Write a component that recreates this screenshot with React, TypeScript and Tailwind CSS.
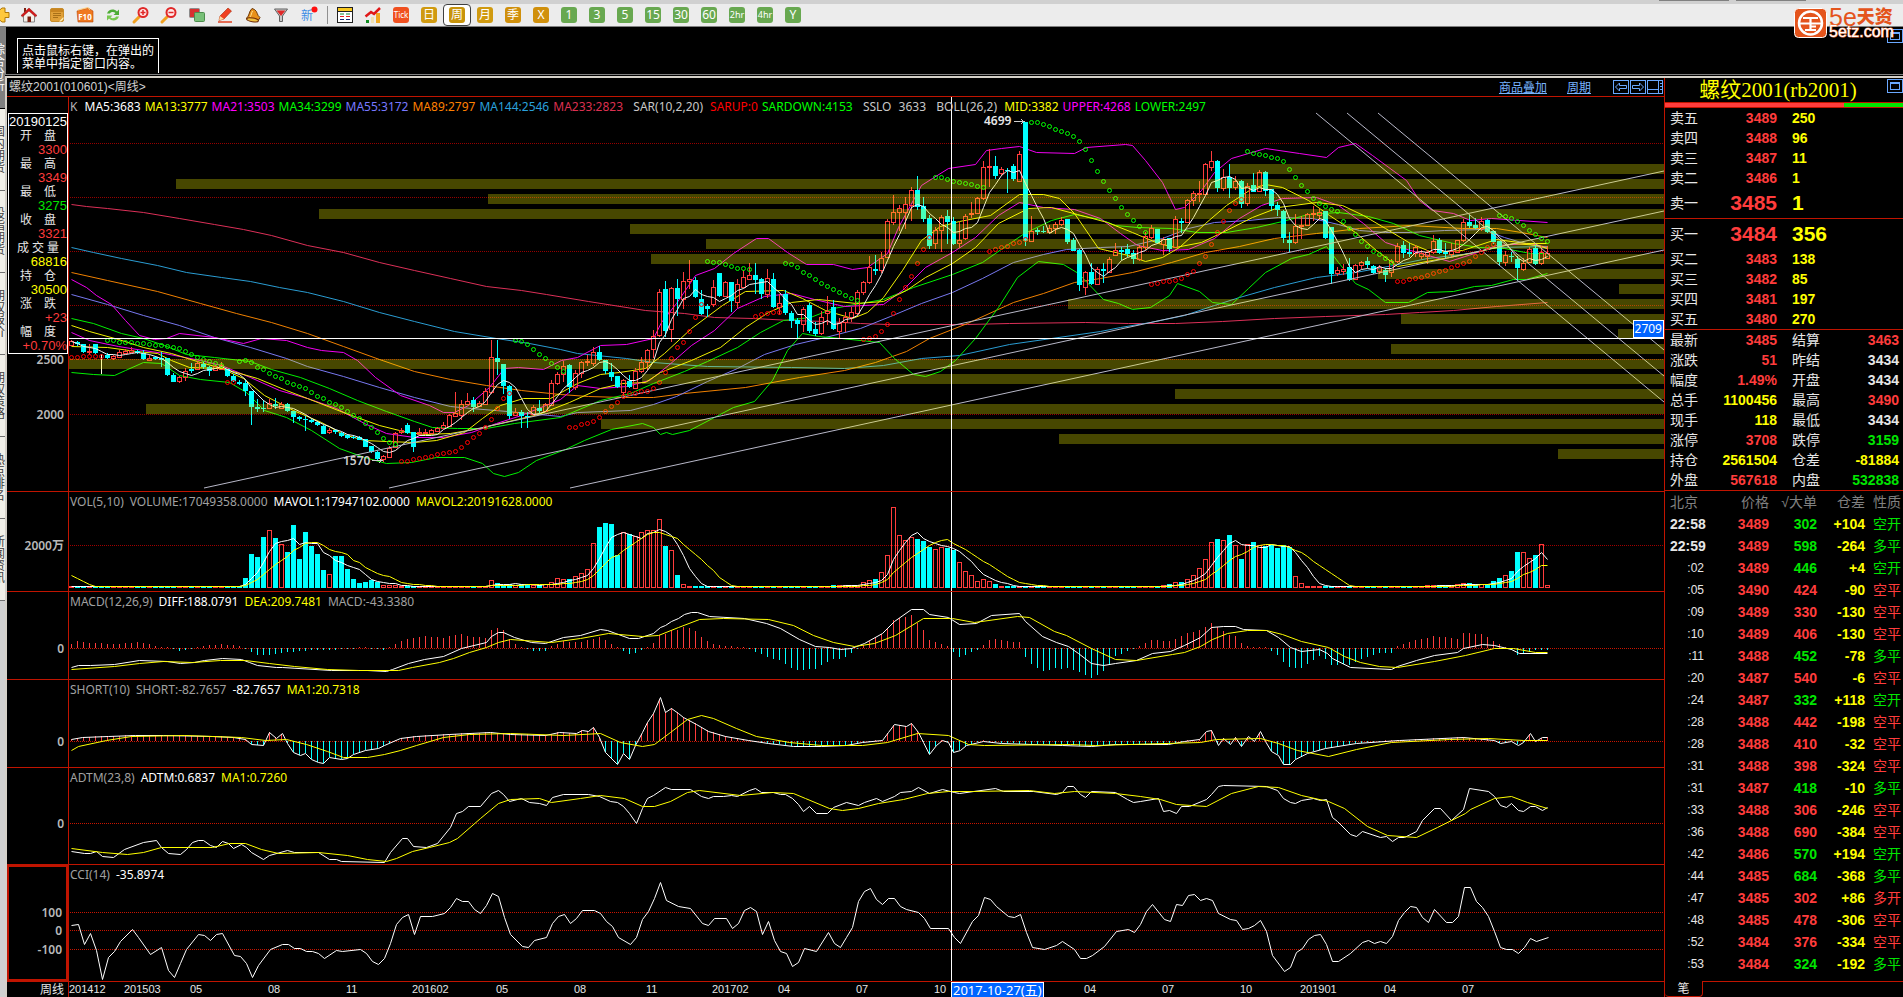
import type { ReactNode } from 'react';

const BARS = 247;
const LEFT = 69;
const WIDTH = 1595;
const CURSOR_X = 951;

const barX = (i: number) => 71 + i * 6;

// direction + high/top/bottom/low of every weekly candle
const candleData = `r340/341/345/346 d341/342/344/346 d344/344/352/353 r344/351/352/355 d344/344/353/354 w353/353/354/374 d353/355/358/359
r355/356/358/360 r350/352/357/357 r349/351/353/353 r347/350/352/353 d350/351/353/354 d350/353/359/360 r355/358/360/361 d356/357/359/360
d352/358/360/367 d358/358/375/376 d373/375/382/382 r376/377/381/383 r368/371/377/381 d363/369/371/373 r361/363/369/370 d362/364/367/369
d366/367/371/376 r365/366/370/371 r362/365/369/370 d369/369/376/377 d374/376/381/382 d380/382/384/385 d380/383/391/396 d391/391/407/425
d399/407/409/412 d400/408/409/412 r399/403/408/409 d398/404/406/409 r402/404/408/409 d403/404/411/412 d411/411/417/423 d416/417/419/421
d416/419/420/431 d419/420/422/423 d421/422/425/426 d425/426/434/434 r428/430/432/434 d429/430/432/434 d432/433/436/437 d434/435/438/439
d435/437/438/439 d436/437/440/440 d439/439/447/447 d446/446/452/453 d451/452/459/460 r455/456/459/462 r446/448/457/458 r432/433/447/448
r428/430/432/434 d423/425/433/434 d432/432/447/452 r428/432/434/436 r429/432/433/434 r429/430/433/434 r427/428/431/432 r422/425/428/428
r414/415/426/427 r392/413/416/417 r400/404/415/420 r393/401/404/405 d397/400/407/412 r401/403/406/407 r388/391/404/404 r340/357/392/394
d340/358/362/375 d364/364/386/394 d385/386/416/419 r408/412/415/416 d410/412/416/428 d412/416/417/428 r405/407/414/416 d400/408/411/413
r403/404/411/412 r380/383/405/406 r372/374/383/385 r361/366/374/382 d364/365/387/393 r370/373/387/390 r361/362/373/378 r355/361/362/366
r347/352/363/366 d346/352/360/361 d360/360/371/374 d363/372/377/381 d376/376/387/388 r379/380/392/396 d375/381/387/388 r368/371/388/389
r357/362/371/373 r349/350/362/370 r330/336/349/358 r289/292/335/337 d281/289/331/337 r287/288/329/342 d279/288/299/316 r272/281/299/309
r260/279/281/289 d277/280/297/298 d290/299/314/315 d304/306/309/317 r280/287/304/307 d273/273/296/297 r281/282/296/297 d282/282/301/312
r279/284/302/308 r270/277/287/287 r263/275/279/280 d263/275/280/294 d278/279/294/299 r269/278/294/298 d273/279/307/308 r294/303/307/315
d290/294/313/315 d311/313/321/328 d318/320/324/338 r307/309/324/332 d303/305/331/333 d322/329/334/336 r311/317/333/335 r296/311/313/325
d300/307/329/330 r318/323/331/338 r312/317/322/332 r307/312/317/322 r290/292/313/315 r281/282/292/295 r256/267/282/284 d255/269/271/275
r252/258/270/273 r219/221/257/258 r195/212/222/225 r205/208/212/231 r197/204/212/229 r187/190/205/221 d176/190/207/210 d197/206/219/222
d215/218/246/249 r227/230/243/249 r215/217/230/252 d210/216/222/244 d217/221/244/245 r222/240/243/248 r214/216/238/240 r202/213/214/218
r197/198/213/214 r161/167/198/200 r149/166/167/187 d156/166/176/179 r167/169/173/176 d168/170/171/193 d164/166/179/181 r151/154/181/182
d122/122/241/246 r216/231/241/242 d228/230/232/235 d226/231/232/233 r225/228/232/233 r222/224/228/234 r217/220/224/226 d219/219/242/244
d238/240/251/251 d249/250/285/291 r271/272/287/295 d263/272/284/285 r267/269/284/285 d263/269/271/283 r257/259/272/273 r243/250/255/256
d247/250/252/260 d244/249/254/257 d250/253/259/264 r245/247/259/261 r232/236/247/250 r225/228/237/239 d229/229/243/244 r237/239/244/255
d238/238/249/252 r216/219/247/248 d218/221/223/233 r199/200/222/223 r191/193/200/206 r181/193/194/202 r163/164/194/195 r151/161/167/171
d160/161/188/192 r169/177/188/191 d164/177/188/198 r176/181/187/190 d180/181/204/208 r183/186/203/206 d173/185/192/192 r170/172/191/192
d171/172/191/196 d189/189/206/211 d202/205/210/216 d210/211/238/243 d232/240/243/252 r214/226/242/244 r216/225/226/239 r213/214/225/226
r206/213/214/221 r209/212/215/220 d211/211/238/239 d227/227/274/284 r267/270/273/276 r264/269/271/275 d258/267/280/281 r264/265/279/280
r261/262/265/269 d257/261/265/268 d265/266/273/274 r265/267/271/274 d268/270/275/282 r259/261/272/277 r243/246/261/263 d241/245/253/258
d243/252/254/257 r245/247/253/257 r250/253/256/259 r250/252/256/264 r235/241/252/254 d238/240/253/254 d243/252/254/259 r243/251/254/257
r240/240/252/253 r219/222/240/242 d215/222/226/228 d218/225/228/229 r217/221/228/231 d219/220/232/233 d231/231/242/244 d241/241/262/266
r251/255/262/266 d252/256/257/262 d256/259/268/281 r258/263/269/271 r247/249/262/263 d245/248/264/265 r246/252/263/265 r246/253/258/259`;

const candles = candleData.split(/\s+/).map((token) => {
  const [high, top, bottom, low] = token.slice(1).split('/').map(Number);
  const up = token[0] === 'r';
  return { up, pale: token[0] === 'w', high, top, bottom, low, close: up ? top : bottom };
});

// parabolic SAR, one run per signal: first bar, side, heights
const sarRuns: [number, 'up' | 'down', number[]][] = [
  [0, 'up', [357, 357, 356, 356, 356, 356]],
  [6, 'down', [340, 340, 342, 342, 342, 343, 343, 344, 345, 345, 346, 347, 348, 351, 354, 357, 359, 361, 363, 365]],
  [26, 'up', [382, 382]],
  [28, 'down', [361, 360, 362, 367, 369, 373, 376, 378, 382, 384, 386, 388, 392, 396, 398, 402, 404, 407, 411, 415, 418, 423, 427, 432, 438, 442, 444]],
  [55, 'up', [461, 461, 459, 458, 457, 456, 454, 453, 452, 451, 447, 442, 437, 433, 427, 419, 408, 398, 393]],
  [74, 'down', [340, 341, 344, 349, 354, 358, 363, 367, 371]],
  [83, 'up', [427, 427, 424, 423, 421, 417, 411, 406, 402, 396, 393, 393, 391, 391, 388, 382, 372, 358, 347, 342, 331, 317, 304]],
  [106, 'down', [261, 262, 262, 264, 266, 268, 268, 269]],
  [114, 'up', [316, 314, 313, 312, 312]],
  [119, 'down', [263, 264, 267, 272, 275, 279, 283, 286, 289, 292, 295, 298, 300]],
  [132, 'up', [339, 338, 336, 331, 324, 313, 299, 287, 276, 263, 249, 237]],
  [144, 'down', [177, 177, 179, 181, 182, 183, 184, 186, 187]],
  [153, 'up', [251, 249, 247, 246, 243, 242, 239]],
  [160, 'down', [122, 122, 124, 126, 129, 131, 133, 136, 141, 149, 160, 171, 181, 190, 198, 207, 214, 220, 226, 232]],
  [180, 'up', [284, 283, 281, 281, 280, 278, 274, 271, 263, 256, 244, 232, 221, 210, 203, 199]],
  [196, 'down', [151, 153, 154, 155, 157, 158, 161, 169, 177, 185, 191, 198, 203, 206, 209, 211, 221, 228, 234, 241, 246, 251, 254, 258, 262]],
  [221, 'up', [281, 281, 279, 278, 277, 275, 273, 271, 270, 267, 265, 263, 261, 256, 252, 247, 244]],
  [238, 'down', [215, 216, 218, 221, 225, 230, 234, 238, 241]],
];

// price profile, [left edge, top]
const profile = [
  [1230, 164], [176, 179], [488, 194], [319, 209], [630, 224], [706, 239], [651, 254], [1378, 269], [1619, 284], [1068, 299],
  [1401, 314], [1618, 329], [1391, 344], [69, 359], [642, 374], [1175, 389], [146, 404], [601, 419], [1059, 434], [1558, 449],
];

const trendLines = [
  [204, 488, 1664, 171], [389, 488, 1664, 211], [570, 488, 1664, 250],
  [1316, 113, 1664, 402], [1347, 113, 1664, 376], [1378, 113, 1664, 350],
];

const priceLines = [
  { color: '#dc3058', points: '71,204 86,206 107,208 143,212 179,218 214,224 243,229 271,235 307,245 343,252 379,262 414,270 450,278 486,286 521,290 546,294 588,301 645,310 684,313 714,317 753,318 791,320 825,321 860,323 887,324 967,324 1009,323 1085,322 1128,323 1175,323 1222,321 1274,318 1325,316 1385,314 1419,312 1453,310 1496,306 1547,302' },
  { color: '#2a9cd2', points: '71,247 93,252 121,258 157,265 186,272 221,277 250,281 279,287 307,292 343,301 379,312 414,321 454,331 496,338 529,343 560,349 577,353 626,358 653,362 707,366 791,367 844,368 883,365 921,358 959,355 1009,344 1051,338 1100,331 1120,327 1150,322 1184,315 1214,305 1239,297 1274,287 1316,277 1355,272 1393,265 1427,258 1470,253 1496,247 1547,246' },
  { color: '#f08000', points: '71,272 107,280 157,291 200,303 236,313 271,322 307,333 343,346 379,359 414,371 450,379 486,385 521,390 560,394 588,396 622,397 653,397 684,393 745,387 799,377 844,370 875,362 906,351 929,338 967,323 1013,302 1043,293 1074,282 1100,278 1132,272 1171,262 1205,252 1239,246 1274,238 1316,233 1359,228 1410,225 1462,228 1496,228 1521,232 1547,237' },
  { color: '#7878f0', points: '71,294 107,304 143,315 179,325 214,337 250,347 286,358 307,366 343,376 379,387 414,397 450,406 471,408 507,411 560,416 577,412 630,410 653,404 676,396 707,381 737,368 764,354 795,344 825,337 860,328 890,316 921,303 952,292 982,278 1013,262 1043,254 1066,249 1100,247 1128,246 1162,238 1188,228 1214,222 1248,220 1278,217 1312,218 1338,224 1359,230 1385,232 1410,232 1444,230 1483,229 1504,237 1521,242 1547,248' },
  { color: '#00f000', points: '71,318 93,323 121,333 143,338 164,345 186,354 214,357 250,361 271,369 300,377 329,388 357,400 386,411 414,421 432,427 457,428 486,428 514,423 560,417 600,400 630,393 653,383 684,371 707,361 737,347 760,332 783,320 810,317 833,308 860,303 883,299 913,287 952,274 982,262 1005,246 1024,233 1051,220 1074,214 1100,219 1115,225 1137,227 1171,228 1197,232 1226,232 1256,227 1282,221 1308,214 1338,212 1368,216 1393,223 1419,235 1453,243 1479,247 1504,248 1530,253 1547,253' },
  { color: '#f000f0', points: '71,332 89,340 118,346 143,350 164,353 200,360 221,365 250,377 279,390 307,398 336,408 364,423 386,433 414,437 443,437 471,432 496,423 521,415 560,399 577,385 600,388 626,386 649,380 668,365 691,345 714,330 737,308 764,296 791,293 814,299 844,306 883,304 902,290 925,267 952,252 975,237 998,215 1019,202 1043,207 1074,209 1100,218 1120,233 1137,245 1162,250 1188,249 1214,238 1239,218 1261,205 1282,198 1316,197 1338,205 1363,223 1385,242 1410,250 1449,261 1474,253 1496,245 1530,243 1547,247' },
  { color: '#f0f000', points: '71,346 107,347 136,351 157,353 171,360 189,367 221,368 243,378 264,395 293,410 321,422 343,434 364,440 386,441 414,442 436,440 464,432 482,418 500,405 523,398 550,398 577,383 600,374 619,372 645,368 664,353 691,328 722,305 745,291 783,290 802,298 825,310 852,318 867,312 883,297 902,270 921,240 940,226 959,221 990,215 1019,194 1043,194 1059,198 1074,213 1098,248 1128,255 1145,261 1162,257 1179,247 1205,223 1226,205 1252,188 1265,184 1282,187 1308,200 1329,215 1355,232 1376,250 1397,266 1415,263 1449,257 1479,251 1496,247 1513,243 1538,245 1547,248' },
  { color: '#f0f000', points: '71,325 89,331 118,339 143,347 171,353 200,362 229,370 257,378 286,390 307,398 343,412 379,425 407,432 425,434 450,433 479,428 500,423 538,414 569,402 600,388 622,383 645,382 660,372 691,360 720,347 745,327 768,312 791,302 818,299 856,303 883,301 906,290 925,277 952,263 975,247 998,223 1028,208 1051,207 1077,214 1107,222 1132,232 1158,243 1175,247 1201,242 1222,232 1252,217 1278,207 1316,202 1342,205 1363,215 1385,228 1410,243 1432,252 1462,250 1496,239 1526,243 1547,243' },
  { color: '#f000f0', points: '71,279 86,287 96,295 111,304 125,320 139,335 154,339 166,338 179,333 214,337 243,343 261,338 286,340 307,347 321,350 343,352 357,360 375,377 400,395 429,405 443,412 454,412 468,405 489,387 504,368 518,367 543,369 561,360 577,357 600,345 626,344 653,338 661,322 676,303 695,275 714,268 733,253 756,238 768,238 787,252 806,264 833,264 852,269 867,267 887,253 898,227 921,185 932,178 948,168 975,164 986,150 1001,148 1019,146 1036,152 1074,153 1086,147 1125,144 1132,145 1145,160 1162,182 1175,209 1184,207 1201,190 1214,172 1231,158 1265,148 1299,153 1326,157 1338,147 1355,143 1372,155 1406,180 1419,200 1432,210 1453,213 1470,220 1491,218 1547,222' },
  { color: '#00f000', points: '71,372 93,374 114,375 125,370 143,362 161,363 179,375 200,379 229,382 246,392 264,410 286,417 311,430 339,448 364,457 386,463 411,462 436,457 464,457 482,463 493,473 504,476 518,472 536,460 565,449 584,440 611,429 642,423 653,427 660,434 666,432 672,434 689,430 714,417 733,407 754,401 772,380 787,350 802,333 818,336 841,338 879,342 894,358 913,374 925,376 940,371 955,360 975,338 998,307 1017,277 1038,261 1063,264 1078,273 1103,299 1118,303 1132,309 1150,307 1169,295 1177,283 1199,291 1212,302 1231,304 1248,288 1265,272 1291,258 1308,254 1326,246 1338,262 1355,283 1368,289 1385,302 1408,302 1427,292 1453,291 1474,286 1491,285 1513,279 1526,279 1547,273' },
];

const volume: number[] = new Array(BARS).fill(1);
const volumeRuns: [number, number[]][] = [
  [29, [9, 33, 30, 50, 57, 49, 43, 35, 62, 28, 55, 41, 33, 17, 13, 31, 31, 18, 8, 4, 5, 7, 5, 2, 2, 2]],
  [70, [7, 4, 2, 3, 2, 3, 3, 2, 2, 3, 5, 9, 8, 8, 11, 14, 18, 44, 60, 64, 63, 32, 55, 53, 51, 55, 57, 57, 68, 41, 37, 12, 3]],
  [127, [2, 2, 2, 2, 2, 5, 7, 8, 15, 32, 80, 52, 47, 50, 48, 46, 40, 38, 40, 39, 37, 25, 16, 12, 6, 8, 6, 3]],
  [182, [2, 3, 5, 5, 8, 12, 19, 28, 45, 48, 47, 52, 42, 28, 43, 45, 42, 41, 42, 39, 42, 40, 11, 4]],
  [226, [2, 2, 2, 2, 2, 3, 4, 4, 3, 3, 3, 6, 9, 12, 16, 35, 35, 29, 32, 43, 2]],
];
volumeRuns.forEach(([start, values]) => values.forEach((v, k) => (volume[start + k] = v)));

const macdDiff = '71,667 78,665 90,665 114,664 139,660 167,661 180,663 194,662 204,660 222,658 241,659 249,662 257,665 276,667 282,667 331,670 367,670 386,671 392,669 408,663 424,659 443,656 461,648 486,642 491,636 498,632 503,632 514,637 531,642 545,643 563,637 580,635 600,629 607,630 629,638 638,638 653,633 660,627 665,625 671,621 678,618 684,614 691,612 697,612 709,616 744,618 766,623 780,628 799,639 815,646 829,647 840,649 851,648 864,643 882,633 894,621 911,609 923,609 929,614 948,617 959,624 976,623 991,615 1019,613 1025,621 1042,636 1056,642 1068,646 1078,653 1091,663 1103,665 1115,663 1136,660 1152,653 1170,651 1184,645 1200,637 1211,627 1223,626 1235,626 1243,629 1266,630 1278,637 1290,647 1301,651 1319,649 1327,653 1332,658 1350,667 1391,669 1397,666 1416,660 1434,655 1457,652 1463,648 1482,644 1494,645 1511,649 1519,653 1547,653';
const macdDea = '71,669 114,666 139,663 163,661 192,662 220,660 245,660 269,663 294,666 327,669 359,670 398,670 412,667 439,662 453,658 469,652 486,647 498,642 510,639 551,642 580,638 608,633 642,636 658,635 678,627 699,619 723,618 768,619 793,625 813,635 833,642 854,646 874,643 895,635 923,618 952,618 974,622 1017,616 1029,617 1054,631 1066,635 1091,648 1115,659 1136,660 1172,654 1184,652 1200,646 1212,639 1227,633 1247,630 1266,630 1282,634 1301,641 1328,647 1344,656 1360,662 1379,666 1397,667 1434,661 1465,655 1494,648 1513,648 1535,652 1547,652';
const shortLine = '71,739 82,737 108,736 135,735 163,735 212,736 233,737 245,739 251,744 263,745 269,732 276,738 282,733 287,743 293,752 300,755 305,753 311,759 318,762 323,763 329,757 341,759 347,758 353,754 365,750 378,748 384,745 400,738 416,736 449,734 490,732 510,734 545,735 559,732 576,733 582,730 588,731 593,727 599,737 605,752 617,764 623,753 629,759 635,745 642,732 647,722 653,713 660,697 665,712 671,708 678,713 683,717 696,724 708,731 725,736 748,740 768,743 793,746 821,746 846,745 862,742 882,740 888,732 894,724 906,726 911,723 918,732 923,742 929,754 936,745 942,740 948,742 953,752 960,750 966,745 983,741 1001,743 1062,745 1091,746 1115,744 1168,744 1184,741 1199,739 1206,731 1211,730 1218,745 1223,738 1230,744 1235,737 1241,746 1248,736 1254,741 1260,731 1265,741 1271,751 1278,755 1283,764 1290,764 1295,759 1307,753 1325,748 1356,743 1399,740 1463,737 1494,740 1500,743 1511,741 1518,745 1523,742 1530,733 1535,741 1542,737 1547,737';
const shortMa = '71,750 78,746 106,740 131,736 184,735 241,737 265,740 286,739 306,744 327,751 343,757 367,757 384,754 400,750 416,745 443,737 469,734 510,733 563,735 600,733 620,742 642,746 654,744 670,732 687,719 701,715 713,718 736,728 756,736 789,742 821,745 862,745 887,742 917,733 948,735 968,744 984,745 1070,744 1095,745 1200,742 1216,739 1260,738 1278,743 1297,750 1328,756 1356,749 1391,742 1449,739 1488,738 1523,740 1547,740';
const adtmLine = '71,851 84,853 90,853 96,851 102,856 113,857 124,849 143,842 156,840 161,847 168,853 180,854 186,849 192,842 198,840 203,840 210,845 216,847 222,841 228,843 233,848 241,844 246,847 251,852 263,859 269,855 287,850 294,852 318,852 329,859 336,859 341,861 384,862 390,852 402,838 407,838 413,846 426,847 437,843 450,827 456,813 462,811 468,806 480,806 491,793 498,790 503,794 509,801 521,798 529,802 539,803 546,805 552,797 563,794 588,794 599,796 610,801 617,802 623,806 629,813 636,823 642,808 647,798 653,795 665,787 671,789 690,789 701,796 708,798 713,796 723,796 731,795 737,796 749,790 755,788 761,792 773,792 780,794 785,794 792,798 798,804 803,811 809,806 816,813 827,813 833,807 846,802 858,805 864,802 876,798 882,801 894,796 900,792 911,791 918,787 929,793 942,789 954,792 959,793 995,788 1003,791 1033,791 1056,794 1062,792 1067,786 1073,786 1080,794 1085,797 1091,791 1115,792 1127,799 1133,802 1140,801 1158,798 1163,811 1169,810 1176,813 1181,806 1189,806 1206,799 1211,794 1218,786 1223,785 1266,786 1277,790 1283,798 1290,802 1295,803 1301,800 1313,798 1320,800 1326,799 1332,817 1337,821 1350,834 1356,836 1362,831 1380,837 1386,836 1392,841 1398,837 1404,837 1416,831 1422,820 1434,808 1440,808 1451,820 1463,809 1469,788 1488,791 1494,796 1500,805 1506,807 1511,803 1518,810 1523,811 1530,806 1535,806 1542,810 1547,807';
const adtmMa = '71,848 102,852 127,854 143,852 161,847 212,847 229,843 245,843 261,849 278,853 318,852 347,855 367,859 386,861 396,858 412,851 429,847 449,842 457,838 480,818 498,803 510,799 539,798 551,802 580,798 600,795 624,798 642,806 654,806 670,801 687,792 699,790 740,795 772,792 793,793 805,798 829,808 842,810 858,808 878,803 903,799 927,793 948,791 972,791 1029,790 1054,793 1074,791 1115,793 1140,796 1160,799 1176,804 1206,806 1231,793 1258,786 1278,787 1301,795 1328,801 1344,808 1367,826 1387,835 1416,837 1437,827 1465,813 1470,809 1494,798 1511,796 1527,802 1547,808';
const cciLine = '71,925 78,924 84,944 90,933 96,950 102,979 108,957 114,951 120,941 132,929 138,937 150,954 161,947 168,970 174,977 180,963 186,949 198,934 204,935 210,940 216,934 222,933 234,955 240,956 246,963 252,977 258,965 270,949 282,944 288,944 294,948 300,948 306,951 312,951 318,953 324,958 336,950 342,951 360,949 366,953 372,961 378,964 384,958 390,943 396,924 402,917 408,914 414,934 420,916 432,916 444,913 450,907 456,898 462,901 468,901 474,909 480,913 486,905 492,893 498,896 504,917 510,934 522,946 528,947 534,940 546,937 552,923 558,916 564,914 570,923 576,918 582,910 594,910 600,913 606,921 612,926 618,937 630,944 636,937 642,919 648,911 654,898 660,882 666,900 678,906 690,908 702,923 708,925 714,918 726,918 732,928 738,923 744,910 750,907 756,911 762,934 768,921 774,940 780,951 786,953 792,966 798,962 804,948 816,951 828,932 834,943 840,947 846,937 852,927 858,901 864,891 870,888 876,899 882,904 888,898 894,898 900,906 906,909 918,912 924,918 930,928 948,928 954,937 960,943 972,921 978,915 984,897 990,899 996,906 1008,916 1014,917 1020,914 1026,932 1032,947 1044,949 1056,945 1062,941 1074,949 1080,958 1086,958 1092,955 1104,946 1116,931 1128,929 1134,932 1140,924 1146,911 1152,904 1164,919 1170,921 1176,904 1182,905 1188,895 1194,894 1200,900 1206,898 1212,900 1218,913 1230,919 1236,920 1242,929 1248,928 1254,925 1260,920 1266,931 1272,955 1284,971 1290,967 1296,952 1302,948 1308,939 1314,935 1320,934 1326,944 1332,961 1338,961 1350,953 1362,942 1368,940 1374,943 1380,941 1386,943 1392,936 1398,920 1404,912 1410,906 1416,907 1422,917 1428,922 1434,909 1446,922 1452,922 1458,916 1464,887 1470,887 1476,901 1482,907 1488,916 1494,931 1500,947 1506,949 1512,949 1518,953 1524,947 1530,938 1536,941 1548,937';

// value of a "x,y x,y" line at a given x
const sample = (line: string, x: number) => {
  const pts = line.split(' ').map((p) => p.split(',').map(Number));
  for (let k = 1; k < pts.length; k++) {
    if (x <= pts[k][0]) {
      const [x0, y0] = pts[k - 1];
      const [x1, y1] = pts[k];
      return y0 + ((y1 - y0) * (x - x0)) / (x1 - x0);
    }
  }
  return pts[pts.length - 1][1];
};

const average = (values: number[], n: number) =>
  values.map((_, i) => {
    const part = values.slice(Math.max(0, i - n + 1), i + 1);
    return part.reduce((a, b) => a + b, 0) / part.length;
  });

const toPoints = (ys: number[]) => ys.map((y, i) => `${barX(i)},${Math.round(y)}`).join(' ');

const ma5 = toPoints(average(candles.map((c) => c.close), 5));
const mavol1 = toPoints(average(volume, 5).map((v) => 587 - v));
const mavol2 = toPoints(average(volume, 10).map((v, i) => 587 - v - Math.max(0, 11 - i * 3)));
const macdBars = candles.map((_, i) => 2 * (sample(macdDea, barX(i)) - sample(macdDiff, barX(i))));
const shortBars = candles.map((_, i) => 741 - sample(shortLine, barX(i)));

const Line = ({ points, color }: { points: string; color: string }) => (
  <polyline points={points} fill="none" stroke={color} transform="translate(0.5 0.5)" shapeRendering="auto" />
);

const Grid = ({ rows, color = '#c81400' }: { rows: number[]; color?: string }) => (
  <>
    {rows.map((y) => (
      <line key={y} x1={70} x2={1664} y1={y + 0.5} y2={y + 0.5} stroke={color} strokeDasharray="1 1" />
    ))}
  </>
);

const Histogram = ({ values, zero }: { values: number[]; zero: number }) => (
  <>
    {values.map((v, i) => {
      const h = Math.max(1, Math.round(Math.abs(v)));
      return <rect key={i} x={barX(i)} y={v >= 0 ? zero - h : zero} width={1} height={h} fill={v >= 0 ? '#ff3c3c' : '#00ffff'} />;
    })}
  </>
);

type Legend = [string, string];

interface PanelProps {
  top: number;
  height: number;
  legend: Legend[];
  labels: [string, number][];
  active?: boolean;
  tight?: boolean;
  left?: ReactNode;
  overlay?: ReactNode;
  children: ReactNode;
}

const Panel = ({ top, height, legend, labels, active, tight, left, overlay, children }: PanelProps) => (
  <section className="flex border-b border-[#c01400]">
    <div className={active ? 'relative w-[61px] shrink-0 border-2 border-[#c01400]' : 'relative w-[61px] shrink-0'}>
      {left}
      {labels.map(([text, y]) => (
        <span
          key={text}
          className="absolute right-1 -translate-y-1/2 text-xs leading-3 font-semibold text-[#b8b8b8]"
          style={{ top: y - top - (active ? 1 : -1) }}
        >
          {text}
        </span>
      ))}
    </div>
    <div className="relative flex-1 border-l border-[#c01400]">
      <svg
        viewBox={`${LEFT} ${top} ${WIDTH} ${height}`}
        preserveAspectRatio="none"
        shapeRendering="crispEdges"
        className="block w-full"
        style={{ height }}
      >
        {children}
        <rect x={CURSOR_X} y={top} width={1} height={height} fill="#fff" />
      </svg>
      <div className={tight ? 'absolute top-0.5 left-px flex gap-1 text-xs leading-4 whitespace-pre' : 'absolute top-0.5 left-px flex gap-1.5 text-xs leading-4 whitespace-pre'}>
        {legend.map(([text, color]) => (
          <span key={text} style={{ color }}>{text}</span>
        ))}
      </div>
      {overlay}
    </div>
  </section>
);

const infoRows = [
  ['开盘', '3300', '#ff3c3c'],
  ['最高', '3349', '#ff3c3c'],
  ['最低', '3275', '#00e600'],
  ['收盘', '3321', '#ff3c3c'],
  ['成交量', '68816', '#ffff00'],
  ['持仓', '30500', '#ffff00'],
  ['涨跌', '+23', '#ff3c3c'],
  ['幅度', '+0.70%', '#ff3c3c'],
];

const InfoBox = () => (
  <dl className="absolute top-4 right-0 left-px z-10 border border-white bg-black pt-px font-['Liberation_Sans','Noto_Sans_CJK_SC',sans-serif] text-[13px] leading-[14px]">
    <dt className="text-center text-white">20190125</dt>
    {infoRows.map(([label, value, color]) => (
      <div key={label}>
        <dt className={label.length > 2 ? 'flex justify-between px-2 text-xs leading-[14px] text-[#e6e6e6]' : 'flex justify-between px-[11px] text-xs leading-[14px] text-[#e6e6e6]'}>
          {label.split('').map((c) => <span key={c}>{c}</span>)}
        </dt>
        <dd className="text-right" style={{ color }}>{value}</dd>
      </div>
    ))}
  </dl>
);

const mainLegend: Legend[] = [
  ['K ', '#b4b4b4'], ['MA5:3683', '#ffffff'], ['MA13:3777', '#ffff00'], ['MA21:3503', '#ff00ff'], ['MA34:3299', '#00ff00'],
  ['MA55:3172', '#7878ff'], ['MA89:2797', '#ff8000'], ['MA144:2546', '#2aa0dc'], ['MA233:2823  ', '#dc3050'],
  ['SAR(10,2,20) ', '#c8c8c8'], ['SARUP:0', '#ff0000'], ['SARDOWN:4153  ', '#00ff00'], ['SSLO ', '#c8c8c8'], ['3633  ', '#c8c8c8'],
  ['BOLL(26,2) ', '#c8c8c8'], ['MID:3382', '#ffff00'], ['UPPER:4268', '#ff00ff'], ['LOWER:2497', '#00ff00'],
];

const PriceChart = () => (
  <>
    <Grid rows={[143, 197, 251, 305, 359, 414]} color="#960000" />
    {priceLines.map((l) => <Line key={l.points} {...l} />)}
    {candles.map((c, i) => {
      const x = barX(i);
      const h = Math.max(1, c.bottom - c.top);
      const color = c.up ? '#ff3c3c' : c.pale ? '#ffffe0' : '#00ffff';
      return (
        <g key={i}>
          <rect x={x} y={c.high} width={1} height={Math.max(0, c.top - c.high)} fill={color} />
          <rect x={x} y={c.bottom} width={1} height={Math.max(0, c.low - c.bottom)} fill={color} />
          {c.up
            ? <rect x={x - 1.5} y={c.top + 0.5} width={4} height={h} fill="none" stroke={color} />
            : !c.pale && <rect x={x - 2} y={c.top} width={5} height={h} fill={color} />}
        </g>
      );
    })}
    <Line points={ma5} color="#f0f0f0" />
    {trendLines.map(([x1, y1, x2, y2]) => (
      <line key={x1} x1={x1} y1={y1} x2={x2} y2={y2} stroke="#b8b8c8" shapeRendering="auto" />
    ))}
    {sarRuns.map(([start, side, ys]) =>
      ys.map((y, k) => (
        <rect key={start + k} x={barX(start + k) - 1.5} y={y - 1.5} width={4} height={4} rx={2} fill="none" stroke={side === 'up' ? '#ff0000' : '#00ff00'} shapeRendering="auto" />
      ))
    )}
    {profile.map(([x, y]) => (
      <rect key={y} x={x} y={y} width={1664 - x} height={10} fill="#ffff00" fillOpacity={0.28} />
    ))}
    <rect x={69} y={338} width={1595} height={1} fill="#fff" />
    <path d="M1014 121.500h10M1021 119.500l3 2l-3 2M372 460.500h10M379 458.500l3 2l-3 2" stroke="#d0d0d0" fill="none" />
  </>
);

const PriceMarks = () => (
  <>
    <span className="absolute top-4 left-[915px] text-xs leading-4 font-semibold text-[#e6e6e6]">4699</span>
    <span className="absolute top-[356px] left-[274px] text-xs leading-4 font-semibold text-[#d0d0d0]">1570</span>
    <span className="absolute top-[223px] right-0 border border-white bg-[#0064ff] px-px text-xs leading-4 text-white">2709</span>
  </>
);

const VolumeChart = () => (
  <>
    <Grid rows={[545]} color="#a00000" />
    {volume.map((v, i) =>
      candles[i].up
        ? <rect key={i} x={barX(i) - 1.5} y={587.5 - v} width={4} height={v} fill="none" stroke="#ff3c3c" />
        : <rect key={i} x={barX(i) - 2} y={587 - v} width={5} height={v + 1} fill="#00ffff" />
    )}
    <Line points={mavol1} color="#ffffff" />
    <Line points={mavol2} color="#ffff00" />
  </>
);

const dateTicks: [string, number][] = [
  ['201412', 69], ['201503', 124], ['05', 190], ['08', 268], ['11', 346], ['201602', 412], ['05', 496], ['08', 574], ['11', 646],
  ['201702', 712], ['04', 778], ['07', 856], ['10', 934], ['04', 1084], ['07', 1162], ['10', 1240], ['201901', 1300], ['04', 1384], ['07', 1462],
];

const DateAxis = () => (
  <div className="flex h-[15px] text-xs leading-[15px] text-[#e6e6e6]">
    <div className="w-[61px] shrink-0 pr-1 text-right">周线</div>
    <div className="relative flex-1 border-l border-[#c01400]">
      {dateTicks.map(([text, x]) => (
        <span key={x} className="absolute top-0 font-['Liberation_Sans',sans-serif] text-[11px] leading-[15px]" style={{ left: `${((x - LEFT) / WIDTH) * 100}%` }}>
          {text}
        </span>
      ))}
      <span
        className="absolute top-0 border border-b-0 border-white bg-[#0064ff] px-px text-[13px] leading-[14px] whitespace-nowrap text-white"
        style={{ left: `${((CURSOR_X - LEFT) / WIDTH) * 100}%` }}
      >
        2017-10-27(五)
      </span>
    </div>
  </div>
);

const R = '#ff3c3c';
const G = '#00e600';
const Y = '#ffff00';
const W = '#e6e6e6';

const asks = [['卖五', '3489', '250'], ['卖四', '3488', '96'], ['卖三', '3487', '11'], ['卖二', '3486', '1']];
const bids = [['买二', '3483', '138'], ['买三', '3482', '85'], ['买四', '3481', '197'], ['买五', '3480', '270']];

const stats = [
  ['最新', '3485', R, '结算', '3463', R],
  ['涨跌', '51', R, '昨结', '3434', W],
  ['幅度', '1.49%', R, '开盘', '3434', W],
  ['总手', '1100456', Y, '最高', '3490', R],
  ['现手', '118', Y, '最低', '3434', W],
  ['涨停', '3708', R, '跌停', '3159', G],
  ['持仓', '2561504', Y, '仓差', '-81884', Y],
  ['外盘', '567618', R, '内盘', '532838', G],
];

// time, price, lots, lots colour, change, nature, nature colour
const ticks = [
  ['22:58', '3489', '302', G, '+104', '空开', G],
  ['22:59', '3489', '598', G, '-264', '多平', G],
  [':02', '3489', '446', G, '+4', '空开', G],
  [':05', '3490', '424', R, '-90', '空平', R],
  [':09', '3489', '330', R, '-130', '空平', R],
  [':10', '3489', '406', R, '-130', '空平', R],
  [':11', '3488', '452', G, '-78', '多平', G],
  [':20', '3487', '540', R, '-6', '空平', R],
  [':24', '3487', '332', G, '+118', '空开', G],
  [':28', '3488', '442', R, '-198', '空平', R],
  [':28', '3488', '410', R, '-32', '空平', R],
  [':31', '3488', '398', R, '-324', '空平', R],
  [':31', '3487', '418', G, '-10', '多平', G],
  [':33', '3488', '306', R, '-246', '空平', R],
  [':36', '3488', '690', R, '-384', '空平', R],
  [':42', '3486', '570', G, '+194', '空开', G],
  [':44', '3485', '684', G, '-368', '多平', G],
  [':47', '3485', '302', R, '+86', '多开', R],
  [':48', '3485', '478', R, '-306', '空平', R],
  [':52', '3484', '376', R, '-334', '空平', R],
  [':53', '3484', '324', G, '-192', '多平', G],
];

const QuoteRow = ({ row, big }: { row: string[]; big?: boolean }) => (
  <tr className={big ? 'h-[30px]' : 'h-5'}>
    <th className="pl-[5px] text-left font-normal text-[#e6e6e6]">{row[0]}</th>
    <td className={big ? 'text-right text-[21px] leading-7 font-bold text-[#ff3c3c]' : 'text-right font-bold text-[#ff3c3c]'}>{row[1]}</td>
    <td className={big ? 'pl-[15px] text-[21px] leading-7 font-bold text-[#ffff00]' : 'pl-[15px] font-bold text-[#ffff00]'}>{row[2]}</td>
  </tr>
);

const QuoteTable = ({ children }: { children: ReactNode }) => (
  <table className="w-full table-fixed border-b border-[#c01400] text-sm leading-5">
    <colgroup>
      <col className="w-[42px]" />
      <col className="w-[70px]" />
      <col />
    </colgroup>
    <tbody>{children}</tbody>
  </table>
);

const WindowIcon = () => (
  <svg viewBox="0 0 16 14" className="h-[14px] w-4" fill="none" stroke="#6aa8ff">
    <rect x="0.500" y="0.500" width="15" height="13" />
    <rect x="3.500" y="3.500" width="9" height="7" />
    <path d="M3 4.500h10" />
  </svg>
);

const QuotePanel = () => (
  <aside className="flex w-[239px] shrink-0 flex-col overflow-hidden border-l border-[#c01400] font-['Liberation_Sans','Noto_Sans_CJK_SC',sans-serif]">
    <div className="relative flex h-6 items-center justify-center pr-3">
      <h1 className="font-['Liberation_Serif','Noto_Sans_CJK_SC',serif] text-[21px] leading-6 whitespace-nowrap text-[#ffff00]">螺纹2001(rb2001)</h1>
      <button type="button" aria-label="窗口" className="absolute top-px right-0"><WindowIcon /></button>
    </div>
    <div className="flex h-1.5 border-y border-[#c01400]">
      <div className="w-3/4 bg-[#ff3c3c]" />
      <div className="flex-1 bg-[#00e600]" />
    </div>
    <QuoteTable>
      {asks.map((row) => <QuoteRow key={row[0]} row={row} />)}
      <QuoteRow row={['卖一', '3485', '1']} big />
    </QuoteTable>
    <QuoteTable>
      <QuoteRow row={['买一', '3484', '356']} big />
      {bids.map((row) => <QuoteRow key={row[0]} row={row} />)}
    </QuoteTable>
    <table className="w-full table-fixed border-b border-[#c01400] text-sm leading-5">
      <colgroup>
        <col className="w-[42px]" />
        <col className="w-[70px]" />
        <col className="w-[50px]" />
        <col />
      </colgroup>
      <tbody>
        {stats.map(([a, av, ac, b, bv, bc]) => (
          <tr key={a} className="h-5">
            <th className="pl-[5px] text-left font-normal text-[#e6e6e6]">{a}</th>
            <td className="text-right font-bold" style={{ color: ac }}>{av}</td>
            <th className="pl-[15px] text-left font-normal text-[#e6e6e6]">{b}</th>
            <td className="pr-1 text-right font-bold" style={{ color: bc }}>{bv}</td>
          </tr>
        ))}
      </tbody>
    </table>
    <table className="w-full table-fixed text-sm leading-[22px]">
      <colgroup>
        <col className="w-[42px]" />
        <col className="w-[62px]" />
        <col className="w-12" />
        <col className="w-12" />
        <col />
      </colgroup>
      <thead>
        <tr className="h-[22px] whitespace-nowrap text-[#808080]">
          <th className="pl-[5px] text-left font-normal">北京</th>
          <th className="text-right font-normal">价格</th>
          <th className="text-right font-normal"><span className="-ml-4">√大单</span></th>
          <th className="text-right font-normal">仓差</th>
          <th className="pl-2 text-left font-normal">性质</th>
        </tr>
      </thead>
      <tbody>
        {ticks.map(([time, price, lots, lc, change, nature, nc], i) => (
          <tr key={i} className="h-[22px] text-right font-bold">
            <td className={time.length > 3 ? 'pl-[5px] text-left text-[#e6e6e6]' : 'pr-[3px] text-xs leading-[22px] font-normal text-[#e6e6e6]'}>{time}</td>
            <td className="text-[#ff3c3c]">{price}</td>
            <td style={{ color: lc }}>{lots}</td>
            <td className="text-[#ffff00]">{change}</td>
            <td className="pl-2 text-left font-normal whitespace-nowrap" style={{ color: nc }}>{nature}</td>
          </tr>
        ))}
      </tbody>
    </table>
    <div className="mt-auto flex h-4">
      <button type="button" className="w-[38px] rounded-b-sm border-r border-b border-[#c01400] text-center text-xs leading-[14px] text-[#e6e6e6]">笔</button>
      <div className="flex-1 border-t border-[#c01400]" />
    </div>
  </aside>
);

const icons: { name: string; art: ReactNode }[] = [
  { name: '后退', art: <path d="M1 8l8-7h3v4.500h4v5h-4V15H9z" fill="#ffc83c" stroke="#b07808" /> },
  {
    name: '首页', art: <>
      <path d="M2.500 8v7h11V8L8 3z" fill="#f4f0ea" stroke="#888" />
      <path d="M0 8.500L8 1l8 7.500-1.500 1.300L8 4 1.500 9.800z" fill="#d81818" stroke="#8c0c0c" strokeWidth=".5" />
      <path d="M3 1h2v3L3 5.500zM6.500 9.500h3.500V15H6.500z" fill="#7c2010" />
    </>,
  },
  {
    name: '笔记', art: <>
      <rect x="1.500" y="1.500" width="13" height="13" rx="1.500" fill="#e0a038" stroke="#c88c28" />
      <path d="M2 2h12v3H2z" fill="#c88420" />
      <path d="M4 6.500h8M4 8.500h8M4 10.500h5" stroke="#a87018" />
      <path d="M10 14.500l4.500-4.500v2l-2.500 2.500z" fill="#fff0b8" />
    </>,
  },
  {
    name: 'F10', art: <>
      <path d="M0 4l11-3 5 3v11H1z" fill="#f07820" stroke="#b84808" strokeWidth=".6" />
      <path d="M1 3l10-2.500 2 2.500" stroke="#ffd080" fill="none" />
      <text x="8" y="12.500" textAnchor="middle" fontSize="8" fontWeight="bold" fill="#fff">F10</text>
    </>,
  },
  {
    name: '刷新', art: <>
      <path d="M2 6.500C3.500 2 9 1.500 12 4.500L14 2.500V8H8.500l2-2C8.500 4.500 5.500 5 5 6.500z" fill="#4cac34" />
      <path d="M14 9.500C12.500 14 7 14.500 4 11.500L2 13.500V8.500h5.500L5.500 10.500C7.500 12 10.500 11 11 9.500z" fill="#78c850" />
    </>,
  },
  {
    name: '放大', art: <>
      <path d="M6 10l-5 5" stroke="#f0a020" strokeWidth="3" strokeLinecap="round" />
      <circle cx="10" cy="5.500" r="4.500" fill="#ffe8e8" stroke="#e02828" strokeWidth="2" />
      <path d="M7.500 5.500h5M10 3v5" stroke="#e02828" strokeWidth="1.500" />
    </>,
  },
  {
    name: '缩小', art: <>
      <path d="M6 10l-5 5" stroke="#f0a020" strokeWidth="3" strokeLinecap="round" />
      <circle cx="10" cy="5.500" r="4.500" fill="#ffe8e8" stroke="#e02828" strokeWidth="2" />
      <path d="M7.500 5.500h5" stroke="#e02828" strokeWidth="1.500" />
    </>,
  },
  {
    name: '窗口叠放', art: <>
      <rect x=".5" y="1.500" width="10" height="9" rx="1" fill="#d83030" stroke="#8c8c8c" />
      <rect x="5.500" y="5.500" width="10" height="9" rx="1" fill="#78c078" stroke="#4c8c4c" />
    </>,
  },
  {
    name: '画线', art: <>
      <path d="M3 9l8-8 3.500 3L7 12l-5 1.500z" fill="#f04020" stroke="#a82808" strokeWidth=".6" />
      <path d="M3 9l4 3-5 1.500z" fill="#ffd8a0" />
      <path d="M1 15h14" stroke="#e04020" strokeWidth="1.500" />
    </>,
  },
  {
    name: '预警', art: <>
      <path d="M7 1.500l2.500 1C13 5 11.500 8 15 10.500L13 14 1 11.500C4.500 10 3.500 4.500 7 1.500z" fill="#e89018" stroke="#6c3808" />
      <ellipse cx="7.500" cy="12.800" rx="6" ry="1.800" fill="#f0c040" stroke="#6c2808" transform="rotate(10 7 13)" />
      <path d="M7.500 4C6.500 6 6.500 8 5 10" stroke="#ffe090" fill="none" />
    </>,
  },
  {
    name: '筛选', art: <>
      <path d="M1.500 2h13L9.500 9v5.500h-3V9z" fill="#c8c8c8" stroke="#606060" />
      <path d="M3.500 3.500h9L8 9z" fill="#e02828" />
    </>,
  },
  {
    name: '新股', art: <>
      <text x="6" y="12.500" textAnchor="middle" fontSize="12" fill="#3c8ce6">新</text>
      <circle cx="13.500" cy="2.500" r="3" fill="#ff1010" />
    </>,
  },
];

const chartIcons: { name: string; art: ReactNode }[] = [
  {
    name: '报价表', art: <>
      <rect x=".5" y=".5" width="15" height="15" fill="#fff" stroke="#202020" />
      <path d="M1 2.500h14" stroke="#f8c820" strokeWidth="3" />
      <path d="M1 4.500h14" stroke="#202020" />
      <path d="M3 7h4M9 7h4" stroke="#108c30" />
      <path d="M3 9.500h4M9 9.500h4" stroke="#e02020" />
      <path d="M3 12.500h4M9 12.500h4" stroke="#102870" />
    </>,
  },
  {
    name: '走势图', art: <>
      <path d="M1 13h3v3H1z" fill="#108c20" />
      <path d="M6 10h3v6H6z" fill="#f0e0b0" />
      <path d="M11 6h4v10h-4z" fill="#f0a820" />
      <path d="M.5 9.500L6 5l3 2 6-6" stroke="#e01818" strokeWidth="2.500" fill="none" />
    </>,
  },
];

const periods = [
  ['Tick', 'bg-[#f05020] text-[8px]'],
  ['日', 'bg-[#d09a10] text-xs'],
  ['周', 'bg-[#c8940c] text-xs'],
  ['月', 'bg-[#d09a10] text-xs'],
  ['季', 'bg-[#d0900c] text-xs'],
  ['X', 'bg-[#d0900c] text-xs'],
  ['1', 'bg-[#68a850] text-xs'],
  ['3', 'bg-[#68a850] text-xs'],
  ['5', 'bg-[#68a850] text-xs'],
  ['15', 'bg-[#68a850] text-xs'],
  ['30', 'bg-[#68a850] text-xs'],
  ['60', 'bg-[#68a850] text-xs'],
  ['2hr', 'bg-[#68a850] text-[9px]'],
  ['4hr', 'bg-[#68a850] text-[9px]'],
  ['Y', 'bg-[#68a850] text-xs'],
];

const ToolButton = ({ name, art }: { name: string; art: ReactNode }) => (
  <button type="button" aria-label={name} className="flex h-[22px] w-7 shrink-0 items-center justify-center">
    <svg viewBox="0 0 16 16" className="h-4 w-4 overflow-visible" fill="none">{art}</svg>
  </button>
);

const Toolbar = () => (
  <header className="relative border-t-4 border-b border-t-[#d0d0d0] border-b-[#808080] bg-[#ececec]">
    <div className="-ml-[13px] flex h-[22px]">
      {icons.map((icon) => <ToolButton key={icon.name} {...icon} />)}
      <div className="flex w-2 justify-center py-0.5"><div className="w-px bg-[#909090]" /></div>
      {chartIcons.map((icon) => <ToolButton key={icon.name} {...icon} />)}
      {periods.map(([label, tone]) => (
        <button
          key={label}
          type="button"
          className={label === '周'
            ? 'flex h-[22px] w-7 items-center justify-center rounded border border-[#404040] bg-white'
            : 'flex h-[22px] w-7 items-center justify-center'}
        >
          <span className={`flex size-4 items-center justify-center rounded-[3px] leading-4 text-white ${tone}`}>{label}</span>
        </button>
      ))}
    </div>
    <div className="absolute -top-1 right-[97px] flex gap-[7px]">
      <div className="h-px w-[70px] bg-[#808080]" />
      <div className="h-px w-[70px] bg-[#808080]" />
    </div>
    <div className="absolute top-1 right-1 z-10 flex gap-0.5">
      <svg viewBox="0 0 33 30" className="h-[30px] w-[33px]" fill="none">
        <rect x="0.500" y="0.500" width="32" height="29" rx="4" fill="#e4541c" stroke="#fff" />
        <circle cx="16.500" cy="15" r="11.500" stroke="#fff" strokeWidth="2.500" />
        <path d="M9 10h15M6 15.500h21M16.500 10v12M11 22h11M17 18.500h5" stroke="#fff" strokeWidth="2.200" />
      </svg>
      <div className="w-[70px] font-['Liberation_Sans','Noto_Sans_CJK_SC',sans-serif] whitespace-nowrap text-[#e4541c]">
        <div className="flex h-[18px] items-center text-[25px] leading-[18px]">5e<span className="text-[18px] font-black">天资</span></div>
        <div className="text-base leading-3 text-white [-webkit-text-stroke:1px_#f08050] [paint-order:stroke_fill]">5etz.com</div>
      </div>
    </div>
  </header>
);

const sideTabs = ['国内期货', '股指期货', '期权报价', '期权策略', '热点排名', '新闻资讯'];

const SideTabs = () => (
  <nav className="w-[5px] shrink-0 overflow-hidden bg-[#d0d0d0] text-xs leading-3">
    <button type="button" className="flex h-[82px] w-[5px] items-center justify-end border-b border-black bg-[#808080] text-white">
      <span className="w-3 shrink-0 break-all">综合分析</span>
    </button>
    {sideTabs.map((tab) => (
      <button key={tab} type="button" className="flex h-[82px] w-[5px] items-center justify-end border-b border-[#707070] bg-[#f0efe8] text-[#404040]">
        <span className="w-3 shrink-0 break-all">{tab}</span>
      </button>
    ))}
  </nav>
);

const NavIcons = () => (
  <div className="flex gap-px">
    {[
      <path key="l" d="M2.500 7L6.500 3v2.500h7v3h-7V11z" />,
      <path key="r" d="M13.500 7L9.500 3v2.500h-7v3h7V11z" />,
      <path key="s" d="M0 9.500h11M11.500 0v14M13 3.500h2M13 6.500h2M13 9.500h2" />,
    ].map((art) => (
      <button key={art.key} type="button" aria-label="切换">
        <svg viewBox="0 0 16 14" className="h-[14px] w-4" fill="none" stroke="#6aa8ff">
          <rect x="0.500" y="0.500" width="15" height="13" />
          {art}
        </svg>
      </button>
    ))}
  </div>
);

export default function App() {
  return (
    <div className="flex min-h-screen w-full flex-col overflow-hidden bg-black font-['Noto_Sans','Noto_Sans_CJK_SC',sans-serif] text-white">
      <Toolbar />
      <div className="flex flex-1">
        <SideTabs />
        <div className="flex min-w-0 flex-1 flex-col">
          <div className="relative h-12 border-b border-l border-[#808080] bg-black">
            <p className="absolute top-[11px] left-[11px] h-[35px] w-[142px] border border-b-0 border-white pt-1 pl-1 font-['Noto_Sans_CJK_SC',sans-serif] text-xs leading-[13px] whitespace-nowrap">
              点击鼠标右键，在弹出的<br />菜单中指定窗口内容。
            </p>
            <button type="button" aria-label="窗口" className="absolute top-0.5 right-0"><WindowIcon /></button>
          </div>
          <div className="mt-px flex flex-1 border-t-2 border-l-2 border-[#d4d0c8]">
            <main className="min-w-0 flex-1">
              <div className="flex h-[19px] items-center justify-between border-b border-[#c01400] pr-px pl-0.5 font-['Noto_Sans_CJK_SC',sans-serif] text-xs leading-[18px]">
                <h2 className="font-['Liberation_Sans','Noto_Sans_CJK_SC',sans-serif] text-[#d0d0d0]">螺纹2001(010601)&lt;周线&gt;</h2>
                <div className="flex items-center text-[#78b4ff]">
                  <a href="#overlay" className="mr-5 underline">商品叠加</a>
                  <a href="#period" className="mr-[22px] underline">周期</a>
                  <NavIcons />
                </div>
              </div>
              <Panel top={97} height={394} legend={mainLegend} tight labels={[['2500', 359], ['2000', 414]]} left={<InfoBox />} overlay={<PriceMarks />}>
                <PriceChart />
              </Panel>
              <Panel
                top={492}
                height={99}
                legend={[['VOL(5,10)', '#a0a0a0'], ['VOLUME:17049358.0000', '#a0a0a0'], ['MAVOL1:17947102.0000', '#fff'], ['MAVOL2:20191628.0000', '#ff0']]}
                labels={[['2000万', 545]]}
              >
                <VolumeChart />
              </Panel>
              <Panel
                top={592}
                height={87}
                legend={[['MACD(12,26,9)', '#a0a0a0'], ['DIFF:188.0791', '#fff'], ['DEA:209.7481', '#ff0'], ['MACD:-43.3380', '#a0a0a0']]}
                labels={[['0', 648]]}
              >
                <Grid rows={[648]} />
                <Histogram values={macdBars} zero={648} />
                <Line points={macdDiff} color="#ffffff" />
                <Line points={macdDea} color="#ffff00" />
              </Panel>
              <Panel
                top={680}
                height={87}
                legend={[['SHORT(10)', '#a0a0a0'], ['SHORT:-82.7657', '#a0a0a0'], ['-82.7657', '#fff'], ['MA1:20.7318', '#ff0']]}
                labels={[['0', 741]]}
              >
                <Grid rows={[741]} />
                <Histogram values={shortBars} zero={741} />
                <Line points={shortLine} color="#ffffff" />
                <Line points={shortMa} color="#ffff00" />
              </Panel>
              <Panel top={768} height={96} legend={[['ADTM(23,8)', '#a0a0a0'], ['ADTM:0.6837', '#fff'], ['MA1:0.7260', '#ff0']]} labels={[['0', 823]]}>
                <Grid rows={[823]} />
                <Line points={adtmLine} color="#ffffff" />
                <Line points={adtmMa} color="#ffff00" />
              </Panel>
              <Panel top={865} height={116} active legend={[['CCI(14)', '#a0a0a0'], ['-35.8974', '#fff']]} labels={[['100', 912], ['0', 930], ['-100', 949]]}>
                <Grid rows={[912, 930, 949]} />
                <Line points={cciLine} color="#ffffff" />
              </Panel>
              <DateAxis />
            </main>
            <QuotePanel />
          </div>
        </div>
      </div>
    </div>
  );
}
